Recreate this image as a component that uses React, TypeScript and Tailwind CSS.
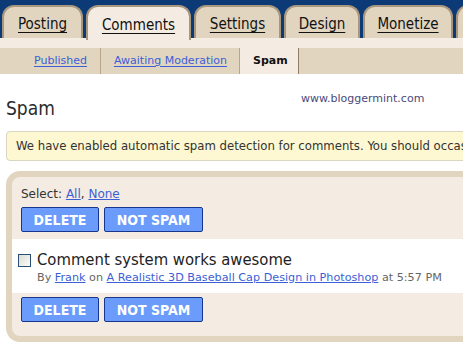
import React from "react";

const font = { fontFamily: "'DejaVu Sans Condensed', 'DejaVu Sans', sans-serif" };
const wide = { fontFamily: "'DejaVu Sans', sans-serif" };

function Tab({ label, width, active }: { label: string; width: number; active?: boolean }) {
  return (
    <div
      style={{ width }}
      className={
        "h-[33px] shrink-0 rounded-t-[12px] border-2 border-b-0 border-[#a8977c] flex items-center justify-center pt-[4px] text-[15px] text-[#111] underline underline-offset-[3px] " +
        (active ? "bg-[#f4ece3] h-[35px] -mb-[2px] relative z-10" : "bg-[#e1d5c0]")
      }
    >
      {label}
    </div>
  );
}

function Buttons() {
  return (
    <div className="flex gap-[5px] pl-[9px]">
      <button className="w-[78px] h-[25px] bg-[#6b9cfc] border border-[#17378f] rounded-[2px] text-white font-bold text-[14px] leading-none">
        DELETE
      </button>
      <button className="w-[99px] h-[25px] bg-[#6b9cfc] border border-[#17378f] rounded-[2px] text-white font-bold text-[14px] leading-none">
        NOT SPAM
      </button>
    </div>
  );
}

export default function App() {
  return (
    <div style={font} className="w-[463px] h-[354px] overflow-hidden bg-white relative">
      {/* top tabs */}
      <div className="h-[38px] bg-[#0b3a76] flex items-end gap-[3px] pl-[2px] w-[600px]">
        <Tab label="Posting" width={81} />
        <Tab label="Comments" width={105} active />
        <Tab label="Settings" width={87} />
        <Tab label="Design" width={76} />
        <Tab label="Monetize" width={90} />
        <Tab label="" width={80} />
      </div>
      <div className="h-[10px] bg-[#f4ece3]" />
      {/* sub tabs */}
      <div style={wide} className="h-[26px] bg-[#e1d5c0] flex items-stretch text-[11px]">
        <div className="pl-[34px] pr-[13px] border-r border-[#b9a68a] flex items-center">
          <a className="text-[#3b5fd6] underline underline-offset-2">Published</a>
        </div>
        <div className="pl-[13px] pr-[12px] border-r border-[#b9a68a] flex items-center">
          <a className="text-[#3b5fd6] underline underline-offset-2">Awaiting Moderation</a>
        </div>
        <div className="pl-[13px] pr-[10px] border-r border-[#8f7c63] bg-[#f4ece3] flex items-center font-bold text-[#111]">
          Spam
        </div>
      </div>

      {/* content */}
      <div className="pl-[6px] relative">
        <div style={wide} className="absolute left-[301px] top-[17px] text-[11px] text-[#4a4a7a]">
          www.bloggermint.com
        </div>
        <h1 className="text-[19px] text-[#2b2b2b] pt-[22px] leading-[24px]">Spam</h1>
        <div className="mt-[11px] h-[30px] w-[600px] bg-[#fdf8d1] border border-[#d9d5c3] rounded-[4px] pl-[9px] flex items-center text-[13px] text-[#333] whitespace-nowrap">
          We have enabled automatic spam detection for comments. You should occasionally check this folder.
        </div>
        <div className="mt-[10px] w-[600px] border-[6px] border-[#e1d5c0] rounded-[14px] bg-[#f4ece3] pt-[9px] pb-[14px]">
          <div style={wide} className="pl-[9px] h-[16px] leading-[16px] text-[12px] text-[#333]">
            Select: <a className="text-[#3b5fd6] underline">All</a>, <a className="text-[#3b5fd6] underline">None</a>
          </div>
          <div className="mt-[5px]">
            <Buttons />
          </div>
          <div className="mt-[7px] h-[54px] bg-white pl-[6px] pt-[11px]">
            <div className="flex items-center gap-[6px]">
              <span className="w-[13px] h-[13px] border border-[#2b4f74] bg-gradient-to-br from-[#dcdcd6] to-[#fbfbf8] shrink-0" />
              <span className="text-[16.5px] text-[#222] leading-[20px]">Comment system works awesome</span>
            </div>
            <div style={wide} className="pl-[19px] text-[11.2px] text-[#666] leading-[15px]">
              By <a className="text-[#3b5fd6] underline">Frank</a> on{" "}
              <a className="text-[#3b5fd6] underline">A Realistic 3D Baseball Cap Design in Photoshop</a> at 5:57 PM
            </div>
          </div>
          <div className="mt-[4px]">
            <Buttons />
          </div>
        </div>
      </div>
    </div>
  );
}
